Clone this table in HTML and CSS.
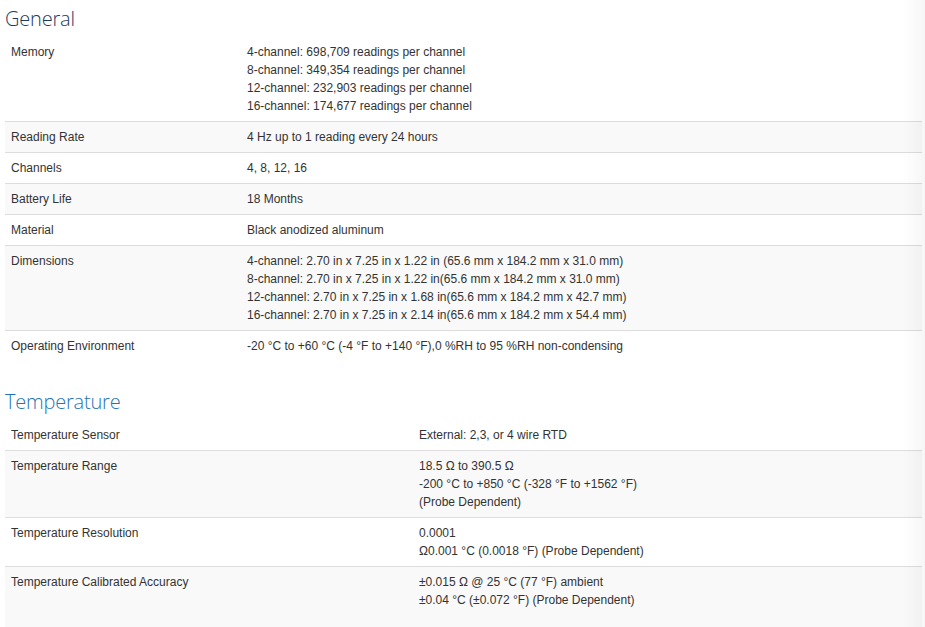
FILE: index.html
```html
<!DOCTYPE html>
<html lang="en">
<head>
<meta charset="utf-8">
<title>Specifications</title>
<link rel="stylesheet" href="styles.css">
</head>
<body>
<div class="page">
  <section class="spec">
    <h2 class="spec-title spec-title-dark">General</h2>
    <table class="spec-table spec-table-general">
      <colgroup><col class="col-label"><col></colgroup>
      <tbody>
        <tr><td>Memory</td><td>4-channel: 698,709 readings per channel<br>8-channel: 349,354 readings per channel<br>12-channel: 232,903 readings per channel<br>16-channel: 174,677 readings per channel</td></tr>
        <tr><td>Reading Rate</td><td>4 Hz up to 1 reading every 24 hours</td></tr>
        <tr><td>Channels</td><td>4, 8, 12, 16</td></tr>
        <tr><td>Battery Life</td><td>18 Months</td></tr>
        <tr><td>Material</td><td>Black anodized aluminum</td></tr>
        <tr><td>Dimensions</td><td>4-channel: 2.70 in x 7.25 in x 1.22 in (65.6 mm x 184.2 mm x 31.0 mm)<br>8-channel: 2.70 in x 7.25 in x 1.22 in(65.6 mm x 184.2 mm x 31.0 mm)<br>12-channel: 2.70 in x 7.25 in x 1.68 in(65.6 mm x 184.2 mm x 42.7 mm)<br>16-channel: 2.70 in x 7.25 in x 2.14 in(65.6 mm x 184.2 mm x 54.4 mm)</td></tr>
        <tr><td>Operating Environment</td><td>-20 °C to +60 °C (-4 °F to +140 °F),0 %RH to 95 %RH non-condensing</td></tr>
      </tbody>
    </table>
  </section>
  <section class="spec">
    <h2 class="spec-title spec-title-blue">Temperature</h2>
    <table class="spec-table spec-table-temp">
      <colgroup><col class="col-label"><col></colgroup>
      <tbody>
        <tr><td>Temperature Sensor</td><td>External: 2,3, or 4 wire RTD</td></tr>
        <tr><td>Temperature Range</td><td>18.5 Ω to 390.5 Ω<br>-200 °C to +850 °C (-328 °F to +1562 °F)<br>(Probe Dependent)</td></tr>
        <tr><td>Temperature Resolution</td><td>0.0001<br>Ω0.001 °C (0.0018 °F) (Probe Dependent)</td></tr>
        <tr class="row-last"><td>Temperature Calibrated Accuracy</td><td>±0.015 Ω @ 25 °C (77 °F) ambient<br>±0.04 °C (±0.072 °F) (Probe Dependent)</td></tr>
      </tbody>
    </table>
  </section>
</div>
<div class="edge-shade"></div>
</body>
</html>
```
FILE: styles.css
```css
html, body {
  margin: 0;
  padding: 0;
  background: #ffffff;
}

body {
  font-family: "Liberation Sans", Arial, sans-serif;
  font-size: 12px;
  color: #333333;
}

.page {
  padding: 7px 3px 0 5px;
}

.spec + .spec {
  margin-top: 29px;
}

.spec-title {
  margin: 0 0 6px 0;
  font-family: "Open Sans", "Noto Sans", sans-serif;
  font-weight: 300;
  font-size: 20px;
  line-height: 24px;
  letter-spacing: -0.2px;
}

.spec-title-dark {
  color: #1e3a63;
}

.spec-title-blue {
  color: #1f74b8;
}

.spec-table {
  width: 100%;
  border-collapse: collapse;
  border-spacing: 0;
  table-layout: fixed;
}

.spec-table-general .col-label {
  width: 236px;
}

.spec-table-temp .col-label {
  width: 408px;
}

.spec-table td {
  padding: 6px 6px;
  line-height: 18px;
  vertical-align: top;
  border-top: 1px solid #dddddd;
}

.spec-table tr:first-child td {
  border-top: 0;
}

.spec-table tr:nth-child(even) td {
  background: #f9f9f9;
}

.row-last td {
  padding-bottom: 20px;
}

.edge-shade {
  position: fixed;
  top: 0;
  right: 0;
  bottom: 0;
  width: 22px;
  background: linear-gradient(to right, rgba(0, 0, 0, 0), rgba(0, 0, 0, 0.035));
  pointer-events: none;
}
```
